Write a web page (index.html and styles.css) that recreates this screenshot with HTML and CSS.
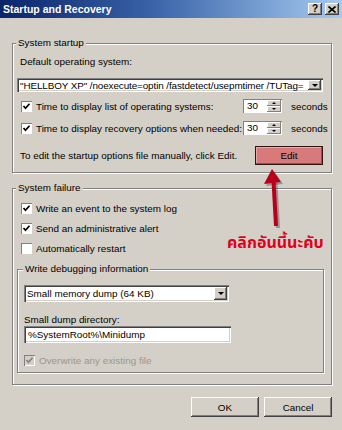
FILE: index.html
```html
<!DOCTYPE html>
<html lang="en">
<head>
  <meta charset="UTF-8">
  <meta name="viewport" content="width=device-width, initial-scale=1.0">
  <title>Startup and Recovery</title>
  <link rel="stylesheet" href="styles.css">
</head>
<body>
  <div class="window">
    <div class="titlebar">
      <span class="title">Startup and Recovery</span>
      <div class="caption-buttons">
        <span class="caption-btn">?</span>
        <span class="caption-btn">
          <svg width="8" height="7" viewBox="0 0 8 7"><path d="M0.5 0.5 L7.5 6.5 M7.5 0.5 L0.5 6.5" stroke="#000" stroke-width="1.6"/></svg>
        </span>
      </div>
    </div>

    <div class="dialog">
      <fieldset class="group group-startup">
        <legend>System startup</legend>
        <div class="field-label">Default operating system:</div>
        <div class="combo combo-os">
          <span class="combo-text">"HELLBOY XP" /noexecute=optin /fastdetect/usepmtimer /TUTag=</span>
          <span class="drop-btn"><span class="tri-down"></span></span>
        </div>

        <div class="check-row row-list">
          <span class="checkbox"><svg width="9" height="9" viewBox="0 0 9 9"><path d="M1.5 4 L3.5 6.2 L7.5 1.8" fill="none" stroke="#000" stroke-width="1.7"/></svg></span>
          <span class="check-label">Time to display list of operating systems:</span>
          <span class="spinner">
            <span class="spin-value">30</span>
            <span class="spin-btns">
              <span class="spin-btn"><span class="tri-up"></span></span>
              <span class="spin-btn"><span class="tri-down small"></span></span>
            </span>
          </span>
          <span class="unit">seconds</span>
        </div>

        <div class="check-row row-recovery">
          <span class="checkbox"><svg width="9" height="9" viewBox="0 0 9 9"><path d="M1.5 4 L3.5 6.2 L7.5 1.8" fill="none" stroke="#000" stroke-width="1.7"/></svg></span>
          <span class="check-label">Time to display recovery options when needed:</span>
          <span class="spinner">
            <span class="spin-value">30</span>
            <span class="spin-btns">
              <span class="spin-btn"><span class="tri-up"></span></span>
              <span class="spin-btn"><span class="tri-down small"></span></span>
            </span>
          </span>
          <span class="unit">seconds</span>
        </div>

        <div class="edit-row">
          <span>To edit the startup options file manually, click Edit.</span>
          <span class="btn btn-edit">Edit</span>
        </div>
      </fieldset>

      <fieldset class="group group-failure">
        <legend>System failure</legend>
        <div class="check-row fail-first">
          <span class="checkbox"><svg width="9" height="9" viewBox="0 0 9 9"><path d="M1.5 4 L3.5 6.2 L7.5 1.8" fill="none" stroke="#000" stroke-width="1.7"/></svg></span>
          <span class="check-label">Write an event to the system log</span>
        </div>
        <div class="check-row fail-next">
          <span class="checkbox"><svg width="9" height="9" viewBox="0 0 9 9"><path d="M1.5 4 L3.5 6.2 L7.5 1.8" fill="none" stroke="#000" stroke-width="1.7"/></svg></span>
          <span class="check-label">Send an administrative alert</span>
        </div>
        <div class="check-row fail-next">
          <span class="checkbox"></span>
          <span class="check-label">Automatically restart</span>
        </div>

        <fieldset class="subgroup">
          <legend>Write debugging information</legend>
          <div class="combo combo-dump">
            <span class="combo-text">Small memory dump (64 KB)</span>
            <span class="drop-btn"><span class="tri-down"></span></span>
          </div>
          <div class="field-label dir-label">Small dump directory:</div>
          <div class="textbox">%SystemRoot%\Minidump</div>
          <div class="check-row disabled">
            <span class="checkbox"><svg width="9" height="9" viewBox="0 0 9 9"><path d="M1.5 4 L3.5 6.2 L7.5 1.8" fill="none" stroke="#808080" stroke-width="1.7"/></svg></span>
            <span class="check-label">Overwrite any existing file</span>
          </div>
        </fieldset>
      </fieldset>

      <div class="footer">
        <span class="btn">OK</span>
        <span class="btn">Cancel</span>
      </div>
    </div>

    <!-- annotation drawn over the dialog -->
    <svg class="note-arrow" width="34" height="72" viewBox="0 0 34 72">
      <g fill="rgba(60,40,40,0.35)">
        <polygon points="16,7 8,22 25,20"/>
        <path d="M17.5 19 L20 64" stroke="rgba(60,40,40,0.35)" stroke-width="4"/>
      </g>
      <g fill="#b8001c">
        <polygon points="14,5 6,20 23,18"/>
        <path d="M15.5 17 L18 62" stroke="#b8001c" stroke-width="4"/>
      </g>
    </svg>
    <div class="note-text">คลิกอันนี้นะคับ</div>
  </div>
</body>
</html>
```

FILE: styles.css
```css
body {
  margin: 0;
  background-color: #d4d0c8;
  font-family: "Liberation Sans", Arial, sans-serif;
  font-size: 9.9px;
  color: #000;
}
.window {
  position: relative;
  width: 342px;
  height: 430px;
  background-color: #d4d0c8;
  overflow: hidden;
}
.titlebar {
  height: 18px;
  display: flex;
  align-items: center;
  justify-content: space-between;
  padding: 0 3px;
  background: linear-gradient(to right, #0a246a, #3a64a8 45%, #a6caf0);
}
.title {
  color: #fff;
  font-weight: bold;
  font-size: 10.5px;
}
.caption-buttons {
  display: flex;
  gap: 3px;
}
.caption-btn {
  width: 14px;
  height: 12px;
  display: flex;
  align-items: center;
  justify-content: center;
  background-color: #d4d0c8;
  box-shadow: inset -1px -1px #404040, inset 1px 1px #fff, inset -2px -2px #808080;
  font-weight: bold;
  font-size: 10px;
  line-height: 1;
}

.dialog {
  padding: 19px 10px 0 12px;
}
.group, .subgroup {
  margin: 0;
  min-width: 0;
  border: 1px solid #808080;
  box-shadow: inset 1px 1px #fff, 1px 1px #fff;
}
.group {
  padding: 0 8px 7px 7px;
}
.group legend {
  margin-left: -4px;
  padding: 0 2px;
  line-height: 12px;
  background-color: #d4d0c8;
}
.group-failure {
  margin-top: 9px;
  padding-bottom: 11px;
}
.subgroup {
  margin: 8px -1px 0 -3px;
  padding: 0 6px 5px 6px;
}
.subgroup legend {
  margin-left: -1px;
}

.field-label {
  line-height: 12px;
  margin-top: 7px;
}
.combo {
  display: flex;
  align-items: center;
  background-color: #fff;
  box-shadow: inset 1px 1px #808080, inset 2px 2px #404040, inset -1px -1px #fff, inset -2px -2px #d4d0c8;
  padding: 2px;
  box-sizing: border-box;
}
.combo-text {
  flex: 1;
  min-width: 0;
  padding-left: 1px;
  white-space: nowrap;
  overflow: hidden;
}
.combo-os .combo-text {
  letter-spacing: -0.1px;
}
.drop-btn {
  width: 13px;
  flex-shrink: 0;
  align-self: stretch;
  display: flex;
  align-items: center;
  justify-content: center;
  background-color: #d4d0c8;
  box-shadow: inset -1px -1px #404040, inset 1px 1px #fff, inset -2px -2px #808080;
}
.tri-down {
  width: 0;
  height: 0;
  border-left: 3px solid transparent;
  border-right: 3px solid transparent;
  border-top: 3px solid #000;
}
.tri-down.small {
  border-left-width: 2px;
  border-right-width: 2px;
  border-top-width: 2px;
}
.tri-up {
  width: 0;
  height: 0;
  border-left: 2px solid transparent;
  border-right: 2px solid transparent;
  border-bottom: 2px solid #000;
}
.combo-os {
  margin: 10px 0 0 -3px;
  height: 14px;
}
.combo-dump {
  margin-top: 10px;
  width: 205px;
  height: 17px;
}

.check-row {
  display: flex;
  align-items: center;
  height: 14px;
}
.checkbox {
  width: 11px;
  height: 11px;
  margin-left: 1px;
  margin-right: 4px;
  box-sizing: border-box;
  display: flex;
  align-items: center;
  justify-content: center;
  background-color: #fff;
  box-shadow: inset 1px 1px #808080, inset -1px -1px #fff;
  flex-shrink: 0;
}
.check-label {
  flex: 1;
  white-space: nowrap;
}
.row-list {
  margin-top: 7px;
}
.row-recovery {
  margin-top: 8px;
}
.spinner {
  display: flex;
  width: 39px;
  height: 14px;
  flex-shrink: 0;
  background-color: #fff;
  box-shadow: inset 1px 1px #808080, inset -1px -1px #fff;
  padding: 1px;
  box-sizing: border-box;
}
.spin-value {
  flex: 1;
  padding-left: 3px;
  line-height: 12px;
}
.spin-btns {
  width: 14px;
  display: flex;
  flex-direction: column;
}
.spin-btn {
  flex: 1;
  display: flex;
  align-items: center;
  justify-content: center;
  background-color: #d4d0c8;
  box-shadow: inset -1px -1px #808080, inset 1px 1px #fff;
}
.unit {
  width: 32px;
  flex-shrink: 0;
  margin-left: 9px;
  white-space: nowrap;
}

.edit-row {
  display: flex;
  align-items: center;
  justify-content: space-between;
  margin-top: 11px;
}
.btn {
  width: 68px;
  height: 20px;
  display: flex;
  align-items: center;
  justify-content: center;
  background-color: #d4d0c8;
  box-shadow: inset -1px -1px #404040, inset 1px 1px #fff, inset -2px -2px #808080;
}
.btn-edit {
  height: 19px;
  background-color: #d8797c;
  border: 1px solid #2e1515;
  box-sizing: border-box;
  box-shadow: inset -1px -1px #a8474b, inset 1px 1px #eba8aa;
}

.fail-first {
  margin-top: 7px;
}
.fail-next {
  margin-top: 6px;
}
.dir-label {
  margin-top: 12px;
}
.textbox {
  width: 207px;
  height: 17px;
  padding-left: 4px;
  box-sizing: border-box;
  line-height: 17px;
  background-color: #fff;
  box-shadow: inset 1px 1px #808080, inset 2px 2px #404040, inset -1px -1px #fff, inset -2px -2px #d4d0c8;
}
.disabled {
  margin-top: 10px;
  color: #9a968e;
}
.disabled .checkbox {
  margin-left: 0;
  background-color: #d4d0c8;
}

.footer {
  display: flex;
  justify-content: flex-end;
  gap: 5px;
  margin-top: 12px;
}

.note-arrow {
  position: absolute;
  left: 258px;
  top: 164px;
}
.note-text {
  position: absolute;
  left: 227px;
  top: 233px;
  color: #e0001c;
  font-family: "Noto Sans Thai", "Loma", Tahoma, sans-serif;
  font-weight: bold;
  font-size: 16px;
  line-height: 20px;
  white-space: nowrap;
}
```
